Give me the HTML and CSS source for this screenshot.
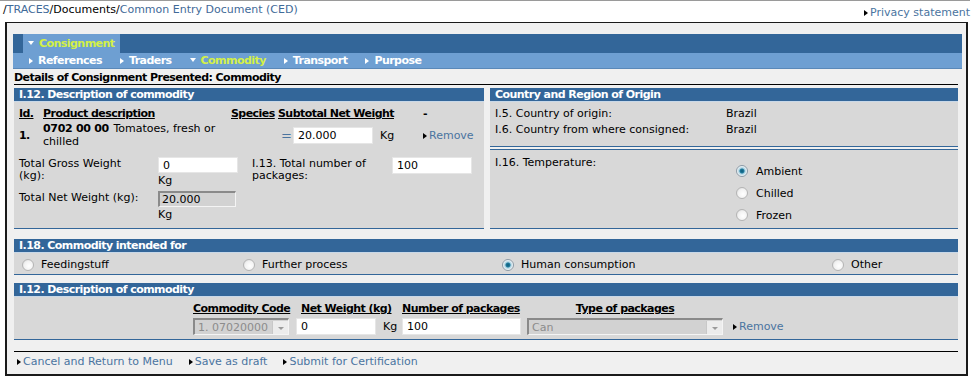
FILE: index.html
```html
<!DOCTYPE html>
<html lang="en">
<head>
    <meta charset="UTF-8">
    <title>TRACES - Common Entry Document</title>
    <link rel="stylesheet" href="styles.css">
</head>
<body>
    <div class="topbar">
        <div class="crumbs">/<a href="#">TRACES</a>/Documents/<a href="#">Common Entry Document (CED)</a></div>
        <a class="link privacy" href="#">Privacy statement</a>
    </div>

    <div class="frame">
        <div class="tabs">
            <div class="tab-row main">
                <span class="tab open active">Consignment</span>
            </div>
            <div class="tab-row sub">
                <span class="tab">References</span>
                <span class="tab">Traders</span>
                <span class="tab open active">Commodity</span>
                <span class="tab">Transport</span>
                <span class="tab">Purpose</span>
            </div>
        </div>

        <div class="content">
            <div class="title">Details of Consignment Presented: Commodity</div>

            <div class="cols">
                <div class="panel">
                    <div class="panel-head">I.12. Description of commodity</div>
                    <div class="panel-body commodity">
                        <div class="lines">
                            <span class="th">Id.</span>
                            <span class="th">Product description</span>
                            <span class="th">Species</span>
                            <span class="th">Subtotal Net Weight</span>
                            <span class="dash">-</span>

                            <span class="num">1.</span>
                            <span class="desc"><b>0702 00 00</b> Tomatoes, fresh or chilled</span>
                            <span></span>
                            <span class="weight"><span class="eq">=</span><input class="field" type="text" value="20.000"><span class="unit">Kg</span></span>
                            <a class="link" href="#">Remove</a>
                        </div>

                        <div class="totals">
                            <span class="label">Total Gross Weight (kg):</span>
                            <span class="stack"><input class="field" type="text" value="0"><span>Kg</span></span>
                            <span class="label">I.13. Total number of packages:</span>
                            <span><input class="field" type="text" value="100"></span>

                            <span class="label nowrap">Total Net Weight (kg):</span>
                            <span class="stack"><input class="field locked" type="text" value="20.000" disabled><span>Kg</span></span>
                        </div>
                    </div>
                </div>

                <div class="panel">
                    <div class="panel-head">Country and Region of Origin</div>
                    <div class="panel-body origin">
                        <div class="pair"><span>I.5. Country of origin:</span><span>Brazil</span></div>
                        <div class="pair"><span>I.6. Country from where consigned:</span><span>Brazil</span></div>
                    </div>
                    <div class="panel-body temp">
                        <span>I.16. Temperature:</span>
                        <div class="choices">
                            <label class="choice"><span class="radio checked"></span>Ambient</label>
                            <label class="choice"><span class="radio"></span>Chilled</label>
                            <label class="choice"><span class="radio"></span>Frozen</label>
                        </div>
                    </div>
                </div>
            </div>

            <div class="panel wide">
                <div class="panel-head">I.18. Commodity intended for</div>
                <div class="panel-body intended">
                    <label class="choice"><span class="radio"></span>Feedingstuff</label>
                    <label class="choice"><span class="radio"></span>Further process</label>
                    <label class="choice"><span class="radio checked"></span>Human consumption</label>
                    <label class="choice"><span class="radio"></span>Other</label>
                </div>
            </div>

            <div class="panel wide">
                <div class="panel-head">I.12. Description of commodity</div>
                <div class="panel-body packages">
                    <span class="th">Commodity Code</span>
                    <span class="th nw">Net Weight (kg)</span>
                    <span class="th">Number of packages</span>
                    <span class="th centered">Type of packages</span>
                    <span></span>

                    <span class="select code"><span>1. 07020000</span><span class="drop"></span></span>
                    <span class="weight"><input class="field" type="text" value="0"><span class="unit">Kg</span></span>
                    <span><input class="field long" type="text" value="100"></span>
                    <span class="select type"><span>Can</span><span class="drop"></span></span>
                    <a class="link" href="#">Remove</a>
                </div>
            </div>

            <div class="footer">
                <a class="link" href="#">Cancel and Return to Menu</a>
                <a class="link" href="#">Save as draft</a>
                <a class="link" href="#">Submit for Certification</a>
            </div>
        </div>
    </div>
</body>
</html>
```

FILE: styles.css
```css
body {
    margin: 0;
    background-color: white;
    color: black;
    font-family: "DejaVu Sans", Verdana, sans-serif;
    font-size: 11px;
}
a {
    color: #3f6a98;
    text-decoration: none;
}
.th, .title, .panel-head, .tabs, .num, .dash {
    letter-spacing: -0.55px;
}
b {
    letter-spacing: -0.3px;
    margin-right: 1px;
}
.link {
    color: #4a74a0;
}
.link::before {
    content: "";
    display: inline-block;
    border-left: 4px solid black;
    border-top: 3.5px solid transparent;
    border-bottom: 3.5px solid transparent;
    margin-right: 2px;
}

.topbar {
    display: flex;
    justify-content: space-between;
    height: 21px;
    border-top: 1px solid #9a9a9a;
    margin-right: 5px;
}
.crumbs {
    padding: 2px 0 0 3px;
}
.privacy {
    padding-top: 5px;
}

.frame {
    margin-left: 5px;
    width: 959px;
    border: 2px solid #1a1a1a;
    border-top-width: 1px;
    background-color: #f0f0f0;
    padding-top: 11px;
}
.tabs {
    margin: 0 4px 0 6px;
    font-weight: bold;
    color: white;
}
.tab-row {
    display: flex;
    align-items: center;
}
.tab-row.main {
    height: 19px;
    background-color: #336699;
}
.tab-row.sub {
    height: 15px;
    background-color: #6e9fd2;
    border-bottom: 1px solid #5a88b8;
    padding-left: 16px;
    gap: 18px;
}
.tab::before {
    content: "";
    display: inline-block;
    border-left: 4px solid white;
    border-top: 3.5px solid transparent;
    border-bottom: 3.5px solid transparent;
    margin-right: 5px;
}
.tab.open::before {
    border-top: 4px solid white;
    border-left: 3.5px solid transparent;
    border-right: 3.5px solid transparent;
    border-bottom: 0;
    vertical-align: 2px;
}
.tab.active {
    color: #d4f046;
}
.main .tab {
    height: 19px;
    line-height: 19px;
    margin-left: 10px;
    padding: 0 6px 0 5px;
    background-color: #6e9fd2;
}

.content {
    padding: 0 8px 0 7px;
}
.title {
    height: 15px;
    line-height: 17px;
    font-weight: bold;
    border-bottom: 1px solid black;
    margin-bottom: 3px;
}

.cols {
    display: grid;
    grid-template-columns: 470px 468px;
    gap: 6px;
}
.panel {
    display: flex;
    flex-direction: column;
}
.panel-head {
    height: 13px;
    line-height: 13px;
    padding-left: 5px;
    background-color: #336699;
    border-bottom: 1px solid #c8d8e8;
    color: white;
    font-weight: bold;
}
.panel-body {
    background-color: #d8d8d8;
    border-bottom: 1px solid #336699;
    padding-left: 5px;
}
.th {
    font-weight: bold;
    text-decoration: underline;
    white-space: nowrap;
}

.commodity {
    flex: 1;
    padding-top: 5px;
    padding-bottom: 6px;
}
.lines {
    display: grid;
    grid-template-columns: 24px 188px 47px 145px auto;
    grid-template-rows: 14px 28px;
    align-items: center;
}
.lines .th {
    align-self: start;
}
.dash {
    font-weight: bold;
    align-self: start;
}
.num {
    font-weight: bold;
}
.desc {
    width: 180px;
    line-height: 13px;
}
.weight {
    display: flex;
    align-items: center;
}
.eq {
    width: 11px;
    text-align: center;
    color: #4a74a0;
    font-size: 13px;
    margin: 0 1px 0 3px;
}
.unit {
    margin-left: 7px;
}
.field {
    box-sizing: border-box;
    width: 80px;
    height: 17px;
    border: 1px solid #e6e6e6;
    background-color: white;
    font-family: inherit;
    font-size: 11px;
    padding: 0 4px;
    color: black;
}
.field.locked {
    width: 78px;
    background-color: #d2d2d2;
    border-width: 2px 1px 1px 2px;
    border-color: #8a8a8a #f4f4f4 #f4f4f4 #8a8a8a;
    padding-left: 2px;
}
.field.long {
    width: 119px;
}

.totals {
    display: grid;
    grid-template-columns: 139px 94px 140px auto;
    grid-template-rows: 30px 30px;
    row-gap: 4px;
    margin-top: 8px;
}
.label {
    line-height: 12px;
    padding-top: 1px;
    padding-right: 10px;
}
.nowrap {
    white-space: nowrap;
}
.stack {
    display: flex;
    flex-direction: column;
    line-height: 13px;
}
.stack span {
    padding-top: 1px;
}

.origin {
    padding-top: 4px;
    padding-bottom: 8px;
}
.pair {
    display: grid;
    grid-template-columns: 231px auto;
    line-height: 16px;
}
.temp {
    flex: 1;
    display: grid;
    grid-template-columns: 241px auto;
    border-top: 1px solid #336699;
    margin-top: 2px;
    padding-top: 6px;
    padding-bottom: 2px;
}
.choices {
    display: flex;
    flex-direction: column;
    padding-top: 4px;
}
.choice {
    display: flex;
    align-items: center;
    height: 22px;
}
.radio {
    box-sizing: border-box;
    width: 12px;
    height: 12px;
    border-radius: 50%;
    border: 1px solid #b4b4b4;
    background: radial-gradient(circle at 60% 60%, #ffffff 0%, #f2f2f2 55%, #d4d4d4 100%);
    margin-right: 8px;
}
.radio.checked {
    border-color: #8c9aa6;
    background: radial-gradient(circle, #0d5a78 0%, #1e7a9c 28%, #a8d0e0 42%, #f4f8fa 70%, #dcdcdc 100%);
}

.wide {
    margin-top: 10px;
}
.wide + .wide {
    margin-top: 8px;
}
.intended {
    display: grid;
    grid-template-columns: 221px 259px 330px auto;
    height: 19px;
    align-items: center;
    padding-left: 8px;
    padding-top: 2px;
}
.intended .choice {
    height: 19px;
}
.intended .radio {
    margin-right: 7px;
}

.packages {
    display: grid;
    grid-template-columns: 103px 106px 125px 206px auto;
    grid-template-rows: 13px 17px;
    row-gap: 3px;
    align-items: center;
    padding: 5px 0 4px 179px;
}
.nw {
    padding-left: 5px;
}
.centered {
    justify-self: center;
    margin-left: -10px;
}
.select {
    box-sizing: border-box;
    display: flex;
    align-items: center;
    justify-content: space-between;
    height: 17px;
    background-color: #d2d2d2;
    border-width: 2px 1px 1px 2px;
    border-style: solid;
    border-color: #8a8a8a #f4f4f4 #f4f4f4 #8a8a8a;
    color: #8c8c8c;
    padding-left: 3px;
}
.select.code {
    width: 96px;
}
.select.type {
    width: 196px;
}
.drop {
    width: 15px;
    height: 13px;
    background-color: #ececec;
    border-left: 1px solid #c8c8c8;
    position: relative;
}
.drop::after {
    content: "";
    position: absolute;
    left: 5px;
    top: 6px;
    border-top: 3px solid #9a9a9a;
    border-left: 3px solid transparent;
    border-right: 3px solid transparent;
}

.footer {
    display: flex;
    gap: 16px;
    margin-top: 11px;
    border-top: 1px solid black;
    padding: 3px 0 6px 3px;
    line-height: 13px;
}
```
